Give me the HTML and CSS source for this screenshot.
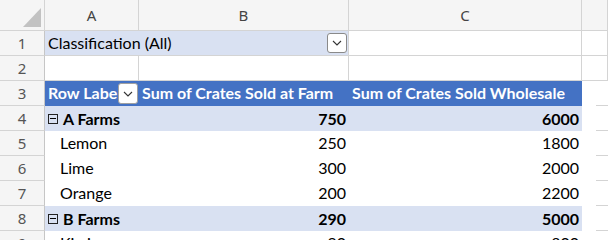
FILE: index.html
```html
<!DOCTYPE html>
<html lang="en">
<head>
    <meta charset="UTF-8">
    <title>Crates PivotTable</title>
    <link rel="stylesheet" href="styles.css">
</head>
<body>
    <div class="sheet">
        <div class="row head-row">
            <div class="corner">
                <svg width="44" height="30" viewBox="0 0 44 30"><polygon points="41,8 41,27 23,27" fill="#c2c2c2"/></svg>
            </div>
            <div class="col-head">A</div>
            <div class="col-head">B</div>
            <div class="col-head">C</div>
            <div class="col-head"></div>
        </div>

        <div class="row">
            <div class="row-num">1</div>
            <div class="cell page-field">
                Classification (All)
                <span class="drop"><svg width="10" height="6" viewBox="0 0 10 6"><path d="M1 1 L5 5 L9 1" fill="none" stroke="#333" stroke-width="1.1"/></svg></span>
            </div>
            <div class="cell"></div>
            <div class="cell"></div>
        </div>

        <div class="row">
            <div class="row-num">2</div>
            <div class="cell"></div>
            <div class="cell"></div>
            <div class="cell"></div>
            <div class="cell"></div>
        </div>

        <div class="row">
            <div class="row-num">3</div>
            <div class="cell pv-head">
                <span class="clip">Row Labels</span>
                <span class="drop small"><svg width="10" height="6" viewBox="0 0 10 6"><path d="M1 1 L5 5 L9 1" fill="none" stroke="#333" stroke-width="1.1"/></svg></span>
            </div>
            <div class="cell pv-head">Sum of Crates Sold at Farm</div>
            <div class="cell pv-head">Sum of Crates Sold Wholesale</div>
            <div class="cell side"></div>
        </div>

        <div class="row">
            <div class="row-num">4</div>
            <div class="cell group"><span class="toggle"></span>A Farms</div>
            <div class="cell group num">750</div>
            <div class="cell group num">6000</div>
            <div class="cell side"></div>
        </div>
        <div class="row">
            <div class="row-num">5</div>
            <div class="cell item label">Lemon</div>
            <div class="cell item num">250</div>
            <div class="cell item num">1800</div>
            <div class="cell side"></div>
        </div>
        <div class="row">
            <div class="row-num">6</div>
            <div class="cell item label">Lime</div>
            <div class="cell item num">300</div>
            <div class="cell item num">2000</div>
            <div class="cell side"></div>
        </div>
        <div class="row">
            <div class="row-num">7</div>
            <div class="cell item label">Orange</div>
            <div class="cell item num">200</div>
            <div class="cell item num">2200</div>
            <div class="cell side"></div>
        </div>
        <div class="row">
            <div class="row-num">8</div>
            <div class="cell group"><span class="toggle"></span>B Farms</div>
            <div class="cell group num">290</div>
            <div class="cell group num">5000</div>
            <div class="cell side"></div>
        </div>
        <div class="row">
            <div class="row-num">9</div>
            <div class="cell item label">Kiwi</div>
            <div class="cell item num">90</div>
            <div class="cell item num">800</div>
            <div class="cell side"></div>
        </div>
    </div>
</body>
</html>
```

FILE: styles.css
```css
body { margin: 0; background: #fff; font-family: Lato, "Liberation Sans", sans-serif; color: #000; overflow: hidden; }
.sheet { width: 608px; height: 240px; overflow: hidden; }
.row { display: grid; grid-template-columns: 45px 94px 210px 233px 26px; height: 25px; }
.head-row { height: 31px; }

.corner, .col-head, .row-num { background: #f5f5f5; box-sizing: border-box; border-right: 1px solid #d4d4d4; border-bottom: 1px solid #d4d4d4; }
.corner svg { display: block; }
.col-head { font-family: "Noto Sans", sans-serif; font-size: 15px; color: #444; text-align: center; line-height: 30px; }
.row-num { font-family: "Noto Sans", sans-serif; font-size: 15px; color: #555; text-align: center; line-height: 24px; border-right-color: #c6c6c6; }

.cell { box-sizing: border-box; border-right: 1px solid #d4d4d4; border-bottom: 1px solid #d4d4d4; font-size: 16px; line-height: 24px; padding: 0 3px; white-space: nowrap; position: relative; }
.page-field { grid-column: span 2; background: #d9e1f2; }

.drop { position: absolute; right: 1px; top: 2px; width: 20px; height: 20px; box-sizing: border-box; background: #fff; border: 1px solid #8a8a8a; border-radius: 3px; display: flex; align-items: center; justify-content: center; }
.drop.small { right: 1px; top: 2px; height: 21px; border-color: #a0a0a0; }

.pv-head { background: #4472c4; color: #fff; font-weight: bold; border: none; overflow: hidden; }
.clip { display: block; width: 70px; overflow: hidden; }

.group { background: #d9e1f2; font-weight: bold; border: none; display: flex; align-items: center; }
.group.num { justify-content: flex-end; }
.item { border: none; }
.label { padding-left: 15px; }
.num { text-align: right; }

.toggle { width: 10px; height: 10px; box-sizing: border-box; border: 1px solid #222; margin-right: 5px; position: relative; }
.toggle::after { content: ""; position: absolute; left: 1px; right: 1px; top: 3px; height: 1px; background: #000; }

.side { border: none; }
.side::after { content: ""; position: absolute; left: 14px; right: 0; bottom: 0; height: 1px; background: #d4d4d4; }
```
